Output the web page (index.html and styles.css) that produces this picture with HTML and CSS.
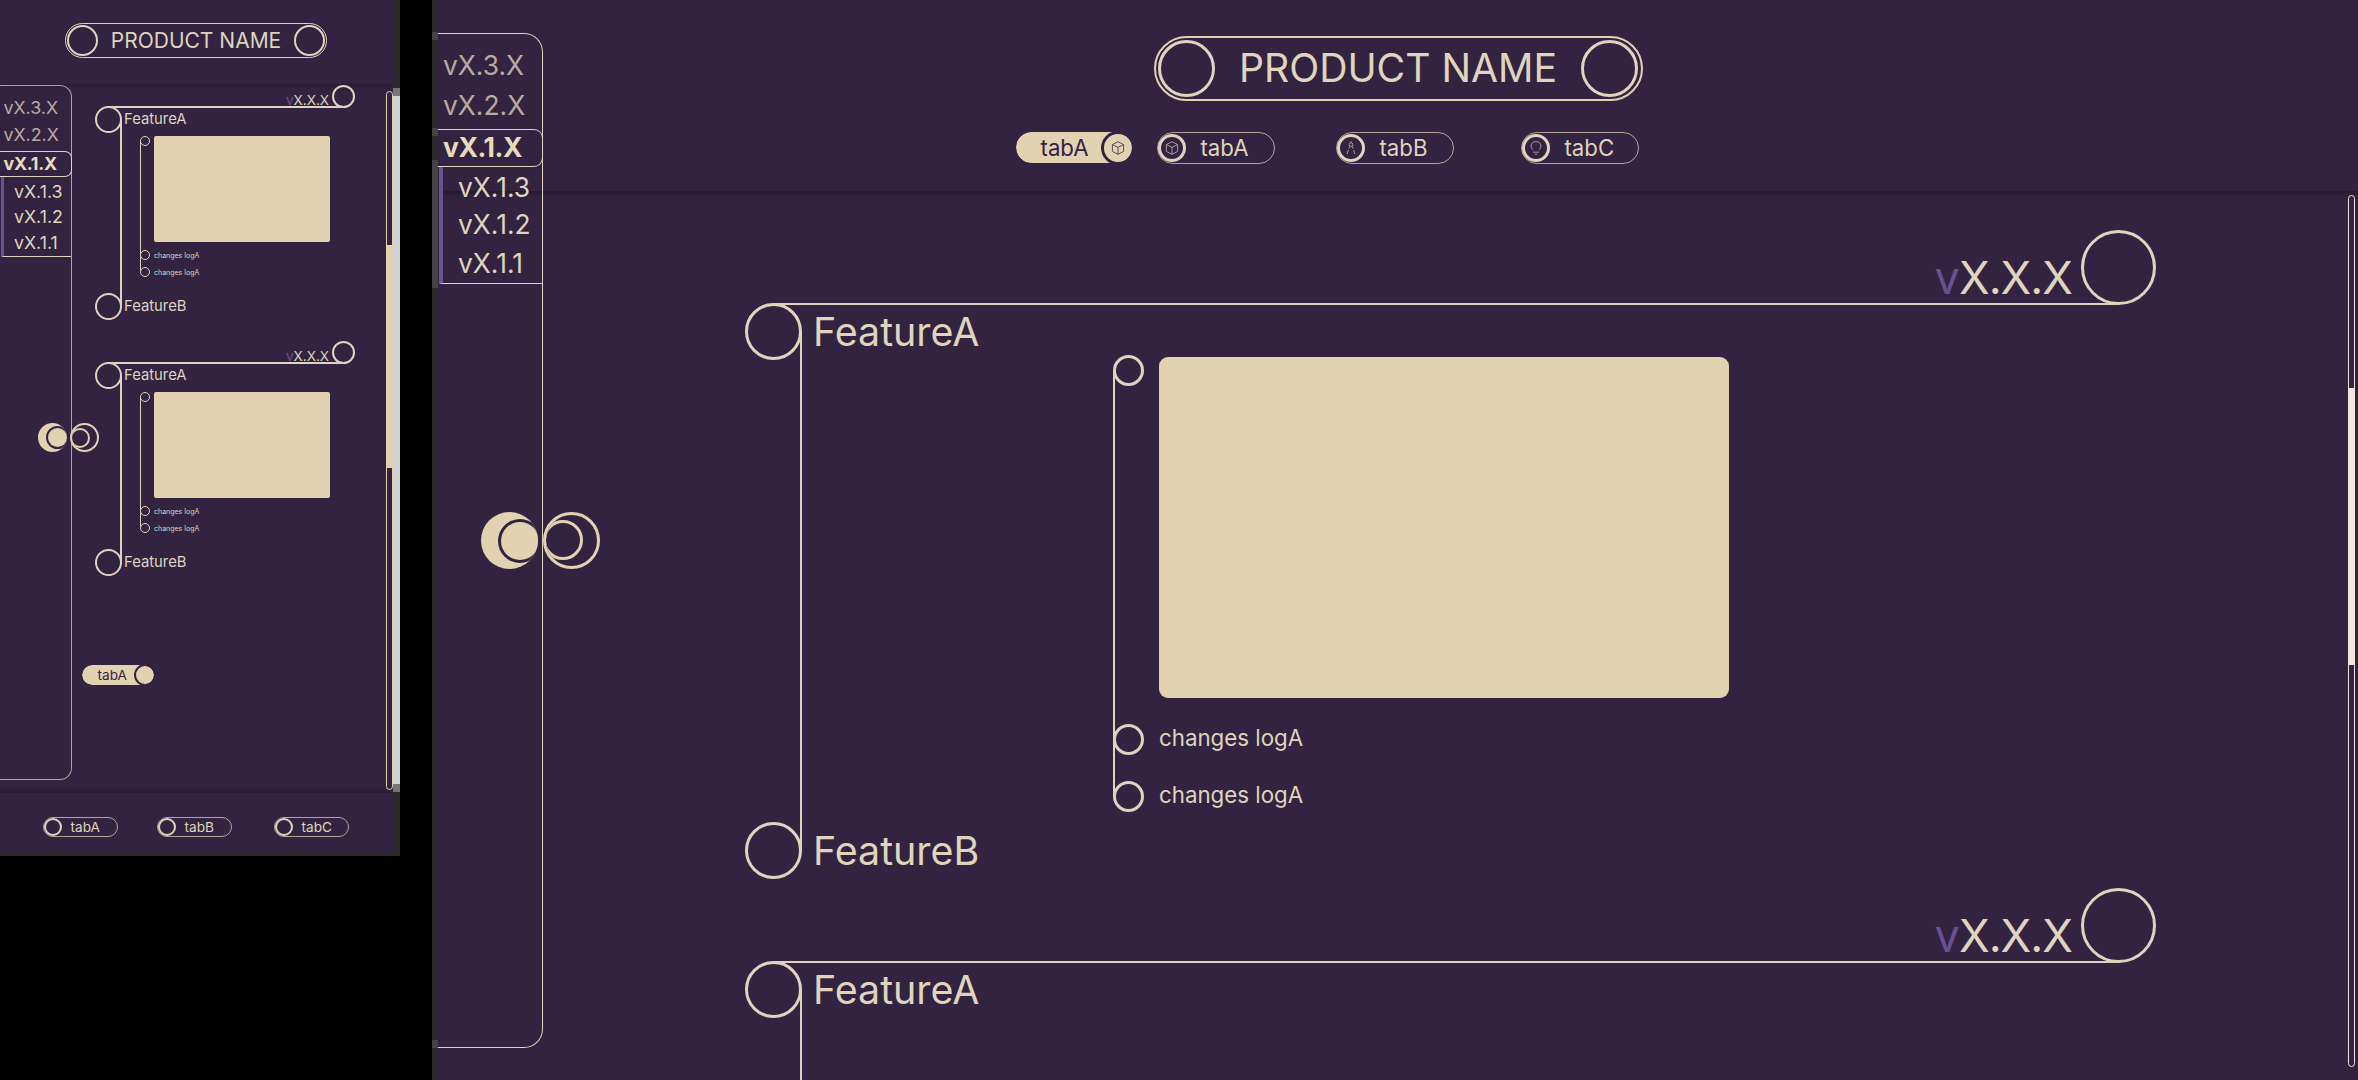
FILE: index.html
```html
<!DOCTYPE html>
<html lang="en">
<head>
<meta charset="utf-8">
<title>Product Name</title>
<link rel="stylesheet" href="styles.css">
</head>
<body>
<svg class="defs" width="0" height="0">
  <symbol id="cube" viewBox="0 0 14 14"><path d="M7 .7 12.6 3.6V10.4L7 13.3 1.4 10.4V3.6ZM1.4 3.6 7 6.3 12.6 3.6M7 6.3V13.3"/></symbol>
  <symbol id="compass" viewBox="0 0 14 14"><circle cx="7" cy="3.6" r="1.9"/><path d="M7 0V1.7M5.6 5.4 5 7.6M8.4 5.4 9 7.6M4.4 9 3 13.2M9.6 9 11 13.2"/></symbol>
  <symbol id="bulb" viewBox="0 0 14 14"><path d="M4.2 8.8C2.7 8.2 2.2 6.8 2.2 5.2 2.2 2.4 3.5.6 7 .6S11.8 2.4 11.8 5.2C11.8 6.8 11.3 8.2 9.8 8.8M4 11.2H10M6 13.3H8"/></symbol>
</svg>
<div class="board">
  <section class="screen phone">
    <div class="view">
      <header class="top">
        <div class="title"><i class="ring"></i><span>PRODUCT NAME</span><i class="ring"></i></div>
      </header>
      <main class="content">
        <article class="entry">
          <div class="version"><span><b>v</b>X.X.X</span><i class="ring"></i></div>
          <div class="features">
            <div class="feature"><i class="ring"></i><span>FeatureA</span></div>
            <div class="logs">
              <div class="log"><i class="ring"></i><div class="picture"></div></div>
              <div class="log"><i class="ring"></i><span>changes logA</span></div>
              <div class="log"><i class="ring"></i><span>changes logA</span></div>
            </div>
            <div class="feature"><i class="ring"></i><span>FeatureB</span></div>
          </div>
        </article>
        <article class="entry">
          <div class="version"><span><b>v</b>X.X.X</span><i class="ring"></i></div>
          <div class="features">
            <div class="feature"><i class="ring"></i><span>FeatureA</span></div>
            <div class="logs">
              <div class="log"><i class="ring"></i><div class="picture"></div></div>
              <div class="log"><i class="ring"></i><span>changes logA</span></div>
              <div class="log"><i class="ring"></i><span>changes logA</span></div>
            </div>
            <div class="feature"><i class="ring"></i><span>FeatureB</span></div>
          </div>
        </article>
        <div class="tab active"><span>tabA</span><i class="knob"></i></div>
      </main>
      <footer class="tabs">
        <div class="tab"><i class="ring"></i><span>tabA</span></div>
        <div class="tab"><i class="ring"></i><span>tabB</span></div>
        <div class="tab"><i class="ring"></i><span>tabC</span></div>
      </footer>
      <nav class="side">
        <span class="major">vX.3.X</span>
        <span class="major">vX.2.X</span>
        <span class="major current">vX.1.X</span>
        <div class="minors"><span>vX.1.3</span><span>vX.1.2</span><span>vX.1.1</span></div>
      </nav>
      <div class="toggle"><i class="moon"></i><i class="rings"></i></div>
      <div class="scroll"><i class="thumb"></i></div>
    </div>
    <div class="gutter"><i></i></div>
  </section>

  <section class="screen desktop">
    <div class="gutter"><i class="g1"></i><i class="g2"></i><i class="g3"></i><i class="g4"></i></div>
    <div class="view">
      <header class="top">
        <div class="title"><i class="ring"></i><span>PRODUCT NAME</span><i class="ring"></i></div>
        <div class="tabs">
          <div class="tab active"><span>tabA</span><i class="knob"><svg><use href="#cube"/></svg></i></div>
          <div class="tab"><i class="ring"><svg><use href="#cube"/></svg></i><span>tabA</span></div>
          <div class="tab"><i class="ring"><svg><use href="#compass"/></svg></i><span>tabB</span></div>
          <div class="tab"><i class="ring"><svg><use href="#bulb"/></svg></i><span>tabC</span></div>
        </div>
      </header>
      <main class="content">
        <article class="entry">
          <div class="version"><span><b>v</b>X.X.X</span><i class="ring"></i></div>
          <div class="features">
            <div class="feature"><i class="ring"></i><span>FeatureA</span></div>
            <div class="logs">
              <div class="log"><i class="ring"></i><div class="picture"></div></div>
              <div class="log"><i class="ring"></i><span>changes logA</span></div>
              <div class="log"><i class="ring"></i><span>changes logA</span></div>
            </div>
            <div class="feature"><i class="ring"></i><span>FeatureB</span></div>
          </div>
        </article>
        <article class="entry">
          <div class="version"><span><b>v</b>X.X.X</span><i class="ring"></i></div>
          <div class="features open">
            <div class="feature"><i class="ring"></i><span>FeatureA</span></div>
          </div>
        </article>
      </main>
      <nav class="side">
        <span class="major">vX.3.X</span>
        <span class="major">vX.2.X</span>
        <span class="major current">vX.1.X</span>
        <div class="minors"><span>vX.1.3</span><span>vX.1.2</span><span>vX.1.1</span></div>
      </nav>
      <div class="toggle"><i class="moon"></i><i class="rings"></i></div>
      <div class="scroll"><i class="thumb"></i></div>
    </div>
  </section>
</div>
</body>
</html>
```

FILE: styles.css
```css
:root {
  --bg: #322440;
  --cream: #e3d2b2;
  --pale: #dfd4bd;
  --purple: #685290;
}
*, *::before { box-sizing: border-box; }
body {
  margin: 0;
  background: #000;
  color: var(--pale);
  font-family: Inter, "Liberation Sans", sans-serif;
  font-weight: 400;
  overflow: hidden;
}
i, b { font-style: normal; font-weight: inherit; }
.defs { display: none; }
.board {
  display: flex;
  gap: 32px;
  align-items: flex-start;
  width: 2358px;
  height: 1080px;
  overflow: hidden;
}
.screen { display: flex; flex: none; }
.view {
  position: relative;
  display: flex;
  flex-direction: column;
  background: var(--bg);
  overflow: hidden;
}
span { white-space: nowrap; }
.ring {
  display: flex;
  align-items: center;
  justify-content: center;
  flex: none;
  border-radius: 50%;
  border: var(--stroke) solid var(--pale);
}

/* sizes of the two layouts */
.phone {
  --stroke: 2px; --line: 2px; --thin: 1px;
  --title-w: 262px; --title-h: 35px; --title-ring: 31px; --title-fs: 21px;
  --f: 27px; --f-fs: 14.8px; --f-gap: 2px;
  --v: 23px; --v-fs: 13.5px; --v-gap: 3px;
  --l: 10px; --l-fs: 7px; --l-gap: 4px; --l-left: 45px; --l-stroke: 1px;
  --pic-w: 176px; --pic-h: 106px; --pic-r: 2px;
  --tab-w: 75px; --tab-h: 20px; --tab-fs: 13.6px; --knob: 18px;
  --s-fs: 17.8px;
}
.desktop {
  --stroke: 3px; --line: 2px; --thin: 1px;
  --title-w: 489px; --title-h: 65px; --title-ring: 57px; --title-fs: 39.2px;
  --f: 57px; --f-fs: 39.4px; --f-gap: 11px;
  --v: 75px; --v-fs: 45px; --v-gap: 9px;
  --l: 31px; --l-fs: 22.3px; --l-gap: 15px; --l-left: 368px; --l-stroke: 3px;
  --pic-w: 570px; --pic-h: 341px; --pic-r: 9px;
  --tab-w: 118px; --tab-h: 32px; --tab-fs: 22.2px; --knob: 28px;
  --s-fs: 26.4px;
}
.phone .view { width: 393px; height: 856px; border-bottom: 5px solid #2a2a2c; }
.desktop .view { width: 1920px; height: 1080px; }

/* header */
.top {
  flex: none;
  display: flex;
  flex-direction: column;
  align-items: center;
}
.phone .top { height: 84px; padding: 23px 1px 0 0; box-shadow: 0 0 4px 1px #231730; }
.desktop .top { height: 191px; padding: 36px 0 0 1px; box-shadow: 0 1px 4px 1px #231730; }
.title {
  display: flex;
  align-items: center;
  justify-content: space-between;
  width: var(--title-w);
  height: var(--title-h);
  border: var(--thin) solid var(--cream);
  border-radius: 99px;
  font-size: var(--title-fs);
}
.title .ring { width: var(--title-ring); height: var(--title-ring); }
.phone .title { padding: 0 1px; }
.desktop .title { border-width: 2px; padding: 0 3px 0 2px; }
.desktop .title span { margin-top: -2px; }

/* tabs */
.tab {
  display: flex;
  align-items: center;
  flex: none;
  width: var(--tab-w);
  height: var(--tab-h);
  border: 1px solid #b3a596;
  border-radius: 99px;
  font-size: var(--tab-fs);
}
.tab .ring { width: var(--knob); height: var(--knob); }
.tab svg { width: 14px; height: 14px; flex: none; fill: none; stroke: #aa9c96; stroke-width: 1; }
.tab.active {
  position: relative;
  z-index: 0;
  justify-content: flex-end;
  border: 0;
  color: var(--bg);
  overflow: hidden;
}
.tab.active::before {
  content: "";
  position: absolute;
  z-index: -1;
  inset: 0 8px 0 0;
  background: var(--cream);
  border-radius: 99px 0 0 99px;
}
.desktop .tab.active::before { right: 14px; }
.knob {
  display: flex;
  align-items: center;
  justify-content: center;
  width: var(--knob);
  height: var(--knob);
  border-radius: 50%;
  background: var(--cream);
  box-shadow: 0 0 0 var(--stroke) var(--bg);
}
.tab .knob svg { stroke: #5f4c58; }
.desktop .tabs { display: flex; align-self: flex-start; margin: 31px 0 0 577px; }
.desktop .tab .ring { margin-right: 14.5px; border-width: 3.5px; }
.desktop .tab.active { width: 116px; height: 31px; margin-right: 25px; }
.desktop .tab.active span { margin-right: 15.5px; }
.desktop .tab .ring + span { margin-top: -2px; }
.desktop .tab:nth-child(3) { margin: 0 67px 0 61px; }
.phone .tabs {
  display: flex;
  align-items: flex-start;
  flex: none;
  height: 58px;
  padding: 24px 0 0 43px;
  box-shadow: 0 0 4px 2px #281b35;
}
.phone .tabs .tab:nth-child(2) { margin: 0 42px 0 39px; }
.phone .tab .ring { margin-right: 8.5px; }
.phone .content .tab { position: absolute; left: 82px; top: 665px; width: 72px; }
.phone .tab.active span { margin-right: 9px; }

/* release entries */
.content { flex: 1; min-height: 0; }
.phone .content { padding: 1px 38px 0 95px; }
.desktop .content { padding: 39px 202px 0 307px; }
.version {
  display: flex;
  align-items: flex-end;
  justify-content: flex-end;
  gap: var(--v-gap);
  height: var(--v);
  margin: 0 calc(var(--v) / 2) 0 calc(var(--f) / 2);
  border-bottom: var(--line) solid var(--pale);
  font-size: var(--v-fs);
  line-height: 1;
}
.version b { color: var(--purple); }
.phone .version span { line-height: 14px; margin-bottom: -1px; }
.desktop .version span { margin-bottom: 3px; letter-spacing: -.022em; }
.version .ring { width: var(--v); height: var(--v); margin: 0 calc(var(--v) / -2) calc(var(--line) * -1) 0; }
.features { position: relative; margin-top: calc(var(--line) * -1); }
.features::before {
  content: "";
  position: absolute;
  left: calc(var(--f) - var(--line));
  top: calc(var(--f) / 2);
  bottom: calc(var(--f) / 2);
  border-left: var(--line) solid var(--pale);
}
.features.open { height: 200px; }
.feature {
  display: flex;
  align-items: center;
  gap: var(--f-gap);
  height: var(--f);
  font-size: var(--f-fs);
}
.feature .ring { width: var(--f); height: var(--f); }
.phone .feature span { margin-top: -1px; }
.logs {
  position: relative;
  display: flex;
  flex-direction: column;
  margin-left: var(--l-left);
  font-size: var(--l-fs);
}
.logs::before {
  content: "";
  position: absolute;
  left: 0;
  top: calc(var(--l) / 2);
  bottom: calc(var(--l) / 2);
  border-left: var(--thin) solid var(--pale);
}
.desktop .logs::before { border-left-width: 2px; }
.log { display: flex; align-items: center; gap: var(--l-gap); height: var(--l); }
.log:first-child { align-items: flex-start; }
.log .ring { width: var(--l); height: var(--l); border-width: var(--l-stroke); }
.desktop .log span { margin-top: -4px; }
.picture { width: var(--pic-w); height: var(--pic-h); border-radius: var(--pic-r); background: var(--cream); }
.phone .logs { margin-top: 4px; margin-bottom: 16px; gap: 7px; }
.phone .feature:first-child { height: 26px; align-items: flex-start; }
.phone .feature:first-child span { line-height: 26px; margin-top: 0; }
.phone .log:first-child { height: 107px; }
.phone .entry { height: 256px; }
.desktop .logs { margin-top: -5px; margin-bottom: 10px; gap: 26px; }
.desktop .log:first-child { height: 343px; }
.desktop .picture { margin-top: 2px; }
.desktop .entry { height: 658px; }

/* version list over the left edge */
.side {
  position: absolute;
  left: 0;
  border: 1px solid var(--pale);
  border-left: 0;
  font-size: var(--s-fs);
  display: flex;
  flex-direction: column;
}
.major { color: #b9ab9f; }
.major.current {
  color: #e8dabd;
  font-weight: 700;
  letter-spacing: -.015em;
  border: 1px solid var(--pale);
  border-left: 0;
}
.minors { display: flex; flex-direction: column; border-bottom: 1px solid var(--pale); }
.phone .side { top: 85px; width: 72px; height: 695px; border-radius: 0 12px 12px 0; padding-top: 8px; line-height: 27px; border-color: #b3a596; }
.phone .side span { padding-left: 3.5px; }
.phone .major.current { height: 26px; margin: 3px -1px 0 0; line-height: 24px; border-radius: 0 7px 7px 0; }
.phone .minors { height: 80px; border-left: 3px solid var(--purple); margin-left: 1px; padding-top: 1px; line-height: 27px; }
.phone .side .minors span { padding-left: 10px; }
.phone .minors span:nth-child(2) { line-height: 24px; }
.phone .minors span:nth-child(3) { line-height: 28px; }
.desktop .side { top: 33px; width: 105px; height: 1015px; border-radius: 0 19px 19px 0; padding-top: 11px; line-height: 40px; }
.desktop .side span { padding-left: 5px; }
.desktop .major.current { height: 38px; margin: 4px -1px 0 0; line-height: 35px; border-radius: 0 9px 9px 0; }
.desktop .minors { height: 117px; border-left: 4px solid var(--purple); margin-left: 1px; line-height: 40px; }
.desktop .side .minors span { padding-left: 15px; }
.desktop .minors span:nth-child(2) { line-height: 35px; }
.desktop .minors span:nth-child(3) { line-height: 43px; }

/* drawer toggle sitting across the list's edge */
.toggle { position: absolute; display: flex; }
.toggle i { position: relative; overflow: hidden; border-radius: 50%; }
.toggle i::before { content: ""; position: absolute; border-radius: 50%; }
.moon { background: var(--cream); }
.moon::before { background: var(--cream); box-shadow: 0 0 0 var(--stroke) var(--bg); }
.rings, .rings::before { border: var(--stroke) solid var(--cream); }
.phone .toggle { left: 38px; top: 423px; gap: 3px; }
.phone .toggle i { width: 29px; height: 29px; }
.phone .moon::before { width: 19px; height: 19px; right: 0; top: 5px; }
.phone .rings::before { width: 20px; height: 20px; left: -2px; top: 2.5px; }
.desktop .toggle { left: 43px; top: 512px; gap: 5px; }
.desktop .toggle i { width: 57px; height: 57px; }
.desktop .moon::before { width: 38px; height: 38px; right: -1px; top: 9.5px; }
.desktop .rings::before { width: 40px; height: 40px; left: -3px; top: 5px; }

/* scroll rails */
.scroll { position: absolute; border: 1px solid #efe6e2; border-radius: 4px; width: 7px; }
.thumb { display: block; margin: 0 -1px; }
.phone .scroll { left: 386px; top: 91px; height: 699px; padding-top: 153px; border-color: var(--cream); }
.phone .thumb { height: 223px; background: var(--cream); }
.desktop .scroll { left: 1910px; top: 195px; height: 872px; padding-top: 192px; }
.desktop .thumb { height: 277px; background: #f0e9df; }

/* window frame remnants beside the screens */
.gutter { display: flex; flex-direction: column; flex: none; background: #2b2b2d; }
.gutter i { background: #434344; }
.phone .gutter { width: 7px; height: 856px; padding-top: 88px; }
.phone .gutter i { height: 704px; background: #d0d4d2; border: solid #777578; border-width: 8px 0; }
.desktop .gutter { width: 6px; height: 1080px; padding-top: 32px; }
.g1, .g2, .g4 { height: 8px; }
.g2 { margin-top: 88px; }
.g3 { height: 128px; margin-top: 24px; }
.desktop .gutter .g4 { margin-top: 752px; }
```
